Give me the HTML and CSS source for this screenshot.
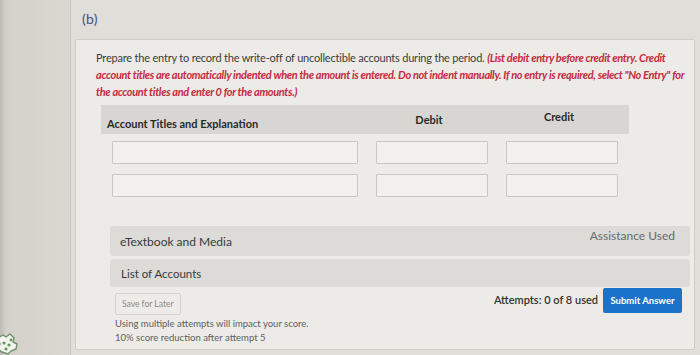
FILE: index.html
```html
<!DOCTYPE html>
<html>
<head>
<meta charset="utf-8">
<link rel="stylesheet" href="styles.css">
</head>
<body>
<div class="screen">
  <aside class="sidebar">
    <div class="ext-icon">
      <svg width="26" height="26" viewBox="0 0 26 26">
        <path d="M2 8 L7 5 L10 7 L14 4 L18 8 L17 12 L21 14 L20 19 L15 21 L12 24 L6 22 L2 19 L4 14 Z" fill="#f4f3ef" stroke="#6f8f6a" stroke-width="1.4"/>
        <circle cx="8" cy="13" r="1.6" fill="#5f9a5e"/>
        <circle cx="13" cy="15" r="1.6" fill="#5f9a5e"/>
        <circle cx="10" cy="19" r="1.6" fill="#5f9a5e"/>
        <circle cx="15" cy="10" r="1.4" fill="#5f9a5e"/>
      </svg>
    </div>
  </aside>
  <main class="main">
    <div class="part-label">(b)</div>
    <section class="card">
      <p class="prompt">Prepare the entry to record the write-off of uncollectible accounts during the period. <em class="instr">(List debit entry before credit entry. Credit account titles are automatically indented when the amount is entered. Do not indent manually. If no entry is required, select "No Entry" for the account titles and enter 0 for the amounts.)</em></p>

      <div class="journal">
        <div class="jhead">
          <div class="col-acct hcell acct-h">Account Titles and Explanation</div>
          <div class="col-num hcell debit-h">Debit</div>
          <div class="col-num hcell credit-h">Credit</div>
        </div>
        <div class="jrow">
          <div class="col-acct cell"><span class="input wide"></span></div>
          <div class="col-num cell"><span class="input"></span></div>
          <div class="col-num cell"><span class="input"></span></div>
        </div>
        <div class="jrow">
          <div class="col-acct cell"><span class="input wide"></span></div>
          <div class="col-num cell"><span class="input"></span></div>
          <div class="col-num cell"><span class="input"></span></div>
        </div>
      </div>

      <div class="bars">
        <div class="bar bar-etext">
          <span>eTextbook and Media</span>
          <span class="assist">Assistance Used</span>
        </div>
        <div class="bar bar-list"><span>List of Accounts</span></div>
      </div>

      <div class="footer">
        <div class="footer-left">
          <button class="save-btn">Save for Later</button>
          <div class="note">Using multiple attempts will impact your score.<br>10% score reduction after attempt 5</div>
        </div>
        <div class="footer-right">
          <span class="attempts">Attempts: 0 of 8 used</span>
          <button class="submit-btn">Submit Answer</button>
        </div>
      </div>
    </section>
  </main>
</div>
</body>
</html>
```

FILE: styles.css
```css
* { box-sizing: border-box; }
html, body {
  margin: 0;
  padding: 0;
  width: 700px;
  height: 355px;
  overflow: hidden;
  background: #d6d3cd;
  font-family: Lato, "Open Sans", sans-serif;
}
.screen {
  display: flex;
  width: 700px;
  height: 355px;
}
.sidebar {
  width: 70px;
  flex: 0 0 70px;
  background: linear-gradient(90deg, #bdbab4 0, #d4d1cb 6px, #dbd8d2 100%);
  display: flex;
  flex-direction: column;
  justify-content: flex-end;
}
.ext-icon {
  height: 26px;
  margin-left: -4px;
  margin-bottom: -1px;
}
.main {
  flex: 1;
  background: #e0ded9;
  border-left: 1px solid #c9c6c0;
  display: flex;
  flex-direction: column;
}
.part-label {
  height: 39px;
  padding: 10px 0 0 11px;
  font-size: 14px;
  color: #3f4f8c;
  letter-spacing: 0.3px;
}
.card {
  margin: 0 5px 5px 4px;
  flex: 1;
  background: #ecebe7;
  border: 1px solid #d0cdc7;
  border-radius: 2px;
  padding: 9px 2px 0 20px;
  display: flex;
  flex-direction: column;
}
.prompt {
  margin: 0;
  font-size: 11px;
  line-height: 17px;
  color: #3c3c3c;
  letter-spacing: -0.2px;
}
.instr {
  color: #c62a3e;
  font-weight: 700;
  font-style: italic;
  letter-spacing: -0.34px;
}
.journal {
  margin: 5px 0 0 5px;
  width: 528px;
}
.jhead {
  display: flex;
  height: 29px;
  background: #d7d6d2;
}
.col-acct { width: 267px; }
.col-num { width: 130px; }
.hcell {
  font-size: 11px;
  font-weight: 700;
  color: #2a2a2a;
  display: flex;
  align-items: center;
}
.acct-h { padding: 8px 0 0 6px; }
.debit-h { justify-content: center; padding: 0 12px 0 4px; }
.credit-h { justify-content: center; padding: 0 12px 6px 4px; }
.jrow {
  display: flex;
  margin-top: 7px;
}
.jrow + .jrow { margin-top: 10px; }
.cell { display: flex; }
.col-acct.cell { padding: 0 10px 0 11px; }
.col-num.cell { padding: 0 10px 0 8px; }
.input {
  display: block;
  width: 100%;
  height: 23px;
  background: #f1f0ed;
  border: 1px solid #c8c7c3;
  border-radius: 1px;
}
.bars {
  margin: 29px 2px 0 14px;
  display: flex;
  flex-direction: column;
  gap: 3px;
}
.bar {
  height: 30px;
  background: #dcdbd7;
  border-radius: 3px;
  display: flex;
  align-items: center;
  justify-content: space-between;
  padding: 0 15px 0 10px;
  font-size: 12px;
  color: #3a3a3a;
}
.bar-list { height: 28px; font-size: 11.5px; padding-left: 11px; }
.assist {
  color: #6a6a6a;
  font-size: 12px;
  align-self: flex-start;
  padding-top: 2px;
}
.footer {
  display: flex;
  justify-content: space-between;
  align-items: flex-start;
  margin-left: 19px;
  padding-right: 10px;
}
.footer-left {
  display: flex;
  flex-direction: column;
  align-items: flex-start;
  padding-top: 6px;
}
.save-btn {
  font-family: Lato, sans-serif;
  font-size: 8.5px;
  color: #8a8a8a;
  background: #edece9;
  border: 1px solid #d2d0cc;
  border-radius: 2px;
  height: 22px;
  padding: 0 6px;
}
.note {
  margin-top: 2px;
  font-size: 9.5px;
  line-height: 14px;
  color: #5e5e5e;
}
.footer-right {
  display: flex;
  align-items: center;
  gap: 5px;
  padding-top: 1px;
}
.attempts {
  font-size: 11px;
  color: #333;
  font-weight: 600;
  padding-bottom: 2px;
}
.submit-btn {
  font-family: Lato, sans-serif;
  font-size: 9.5px;
  font-weight: 700;
  color: #fff;
  background: #1b72c9;
  border: none;
  border-radius: 2px;
  height: 25px;
  width: 79px;
  padding: 0;
}
```
